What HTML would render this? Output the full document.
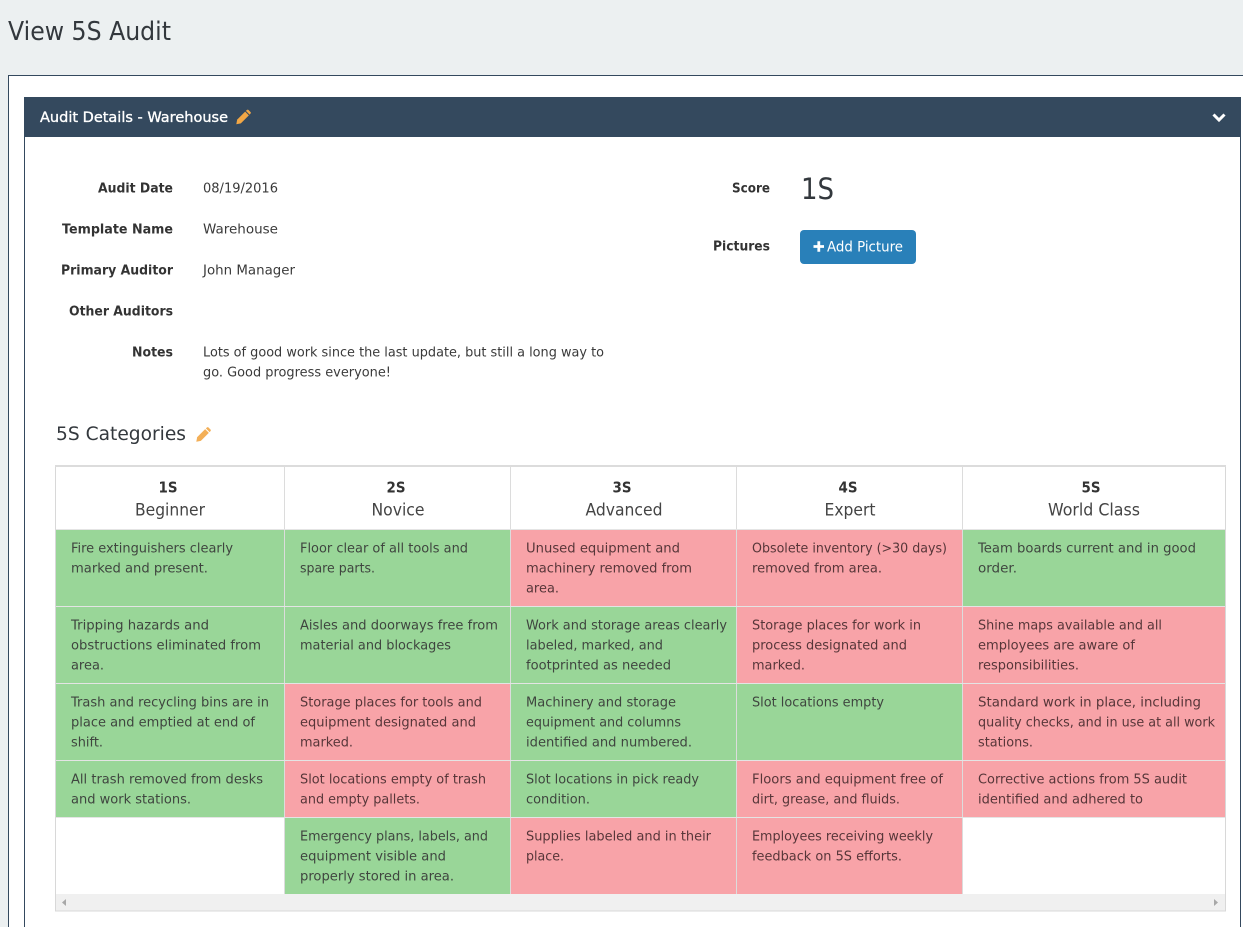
<!DOCTYPE html>
<html><head><meta charset="utf-8"><title>View 5S Audit</title>
<style>
html,body{margin:0;padding:0;width:1243px;height:927px;overflow:hidden;background:#ecf0f1}
svg{display:block}
text{font-family:"DejaVu Sans","Liberation Sans",sans-serif;font-size:13.6px;fill:#3a3a3a}
.b{font-weight:bold;fill:#333}
.c text{fill:#3f453f}
.r text{fill:#573639}
.h{font-size:16.5px;fill:#444}
</style></head><body>
<svg width="1243" height="927" viewBox="0 0 1243 927" xmlns="http://www.w3.org/2000/svg">
<defs><g id="p"><path d="M1.15 10.15 L9.15 2.15 L12.85 5.85 L4.85 13.85 L0.3 14.7 Z" fill="#f2a745"/><path d="M9.9 1.4 L11 .4 Q11.7 -.1 12.4 .4 L14.6 2.6 Q15.1 3.3 14.6 4 L13.6 5.1 Z" fill="#f2a745"/></g></defs>
<rect width="1243" height="927" fill="#ecf0f1"/>
<text x="8" y="40" style="font-size:25.5px;fill:#33383d" textLength="163" lengthAdjust="spacingAndGlyphs">View 5S Audit</text>
<rect x="8.5" y="75.5" width="1240" height="860" fill="#fff" stroke="#34495e"/>
<rect x="24.5" y="97.5" width="1216" height="840" fill="#fff" stroke="#34495e"/>
<rect x="24" y="97" width="1217" height="40" fill="#34495e"/>
<text x="40" y="122" class="b" style="fill:#fff;font-weight:normal;font-size:14.5px;stroke:#fff;stroke-width:.35" textLength="188" lengthAdjust="spacingAndGlyphs">Audit Details - Warehouse</text>
<use href="#p" x="236" y="109.5"/>
<path d="M1213.5 114.5 L1219 120 L1224.5 114.5" fill="none" stroke="#fff" stroke-width="3"/>

<g text-anchor="end">
<text x="173" y="192.5" class="b" textLength="75" lengthAdjust="spacingAndGlyphs">Audit Date</text>
<text x="173" y="233.5" class="b" textLength="111" lengthAdjust="spacingAndGlyphs">Template Name</text>
<text x="173" y="274.5" class="b" textLength="112" lengthAdjust="spacingAndGlyphs">Primary Auditor</text>
<text x="173" y="315.5" class="b" textLength="104" lengthAdjust="spacingAndGlyphs">Other Auditors</text>
<text x="173" y="356.5" class="b" textLength="41" lengthAdjust="spacingAndGlyphs">Notes</text>
<text x="770" y="192.5" class="b" textLength="38" lengthAdjust="spacingAndGlyphs">Score</text>
<text x="770" y="250.5" class="b" textLength="57" lengthAdjust="spacingAndGlyphs">Pictures</text>
</g>
<text x="203" y="192.5" textLength="75" lengthAdjust="spacingAndGlyphs">08/19/2016</text>
<text x="203" y="233.5" textLength="75" lengthAdjust="spacingAndGlyphs">Warehouse</text>
<text x="203" y="274.5" textLength="92" lengthAdjust="spacingAndGlyphs">John Manager</text>
<text x="203" y="356.5" textLength="401" lengthAdjust="spacingAndGlyphs">Lots of good work since the last update, but still a long way to</text>
<text x="203" y="376.5" textLength="188" lengthAdjust="spacingAndGlyphs">go. Good progress everyone!</text>
<text x="801" y="199" style="font-size:29px;fill:#33383d" textLength="33" lengthAdjust="spacingAndGlyphs">1S</text>
<rect x="800" y="230" width="116" height="34" rx="4" fill="#2980b9"/>
<path d="M813.5 246.5 H824 M818.8 241.2 V251.8" stroke="#fff" stroke-width="2.8"/>
<text x="827" y="251.5" style="fill:#fff;font-size:14.5px" textLength="76" lengthAdjust="spacingAndGlyphs">Add Picture</text>

<text x="56" y="440" style="font-size:19px;fill:#33383d" textLength="130" lengthAdjust="spacingAndGlyphs">5S Categories</text>
<use href="#p" x="196" y="427" opacity=".9"/>

<!-- table -->
<rect x="55.5" y="465.5" width="1170" height="445.5" fill="#fff" stroke="#d8d8d8" stroke-width="1"/>
<rect x="55" y="465" width="1171" height="2" fill="#dcdcdc"/>
<g fill="#99d698">
<rect x="56" y="530" width="228" height="287"/>
<rect x="285" y="530" width="225" height="153"/>
<rect x="511" y="607" width="225" height="76"/>
<rect x="511" y="684" width="225" height="133"/>
<rect x="737" y="684" width="225" height="76"/>
<rect x="963" y="530" width="262" height="76"/>
<rect x="285" y="818" width="225" height="76"/>
</g>
<g fill="#f8a3a8">
<rect x="511" y="530" width="225" height="76"/>
<rect x="737" y="530" width="225" height="153"/>
<rect x="963" y="607" width="262" height="210"/>
<rect x="285" y="684" width="225" height="133"/>
<rect x="737" y="761" width="225" height="56"/>
<rect x="511" y="818" width="225" height="76"/>
<rect x="737" y="818" width="225" height="76"/>
</g>
<g stroke="#e4e4e4" stroke-width="1">
<path d="M284.5 467V894M510.5 467V894M736.5 467V894M962.5 467V894" stroke="#dcdcdc"/>
<path d="M56 529.5H1225M56 606.5H1225M56 683.5H1225M56 760.5H1225M56 817.5H1225"/>
</g>
<rect x="56" y="894" width="1169" height="16.5" fill="#f0f0f0"/>
<path d="M66 899 V906 L62 902.5 Z" fill="#a8a8a8"/>
<path d="M1214 899 V906 L1218 902.5 Z" fill="#a8a8a8"/>

<g text-anchor="middle">
<text x="168" y="492.5" class="b" style="font-size:15px" textLength="19" lengthAdjust="spacingAndGlyphs">1S</text>
<text x="170" y="515.5" class="h" textLength="70" lengthAdjust="spacingAndGlyphs">Beginner</text>
<text x="396" y="492.5" class="b" style="font-size:15px" textLength="19" lengthAdjust="spacingAndGlyphs">2S</text>
<text x="398" y="515.5" class="h" textLength="53" lengthAdjust="spacingAndGlyphs">Novice</text>
<text x="622" y="492.5" class="b" style="font-size:15px" textLength="19" lengthAdjust="spacingAndGlyphs">3S</text>
<text x="624" y="515.5" class="h" textLength="77" lengthAdjust="spacingAndGlyphs">Advanced</text>
<text x="848" y="492.5" class="b" style="font-size:15px" textLength="19" lengthAdjust="spacingAndGlyphs">4S</text>
<text x="850" y="515.5" class="h" textLength="51" lengthAdjust="spacingAndGlyphs">Expert</text>
<text x="1091" y="492.5" class="b" style="font-size:15px" textLength="19" lengthAdjust="spacingAndGlyphs">5S</text>
<text x="1094" y="515.5" class="h" textLength="92" lengthAdjust="spacingAndGlyphs">World Class</text>
</g>

<g class="c" transform="translate(0,-.5)">
<text x="71" y="553" textLength="162" lengthAdjust="spacingAndGlyphs">Fire extinguishers clearly</text>
<text x="71" y="573" textLength="137" lengthAdjust="spacingAndGlyphs">marked and present.</text>
<text x="71" y="630" textLength="138" lengthAdjust="spacingAndGlyphs">Tripping hazards and</text>
<text x="71" y="650" textLength="190" lengthAdjust="spacingAndGlyphs">obstructions eliminated from</text>
<text x="71" y="670" textLength="33" lengthAdjust="spacingAndGlyphs">area.</text>
<text x="71" y="707" textLength="198" lengthAdjust="spacingAndGlyphs">Trash and recycling bins are in</text>
<text x="71" y="727" textLength="184" lengthAdjust="spacingAndGlyphs">place and emptied at end of</text>
<text x="71" y="747" textLength="32" lengthAdjust="spacingAndGlyphs">shift.</text>
<text x="71" y="784" textLength="192" lengthAdjust="spacingAndGlyphs">All trash removed from desks</text>
<text x="71" y="804" textLength="120" lengthAdjust="spacingAndGlyphs">and work stations.</text>
<text x="300" y="553" textLength="168" lengthAdjust="spacingAndGlyphs">Floor clear of all tools and</text>
<text x="300" y="573" textLength="75" lengthAdjust="spacingAndGlyphs">spare parts.</text>
<text x="300" y="630" textLength="198" lengthAdjust="spacingAndGlyphs">Aisles and doorways free from</text>
<text x="300" y="650" textLength="151" lengthAdjust="spacingAndGlyphs">material and blockages</text>
<text x="300" y="841" textLength="188" lengthAdjust="spacingAndGlyphs">Emergency plans, labels, and</text>
<text x="300" y="861" textLength="146" lengthAdjust="spacingAndGlyphs">equipment visible and</text>
<text x="300" y="881" textLength="154" lengthAdjust="spacingAndGlyphs">properly stored in area.</text>
<text x="526" y="630" textLength="201" lengthAdjust="spacingAndGlyphs">Work and storage areas clearly</text>
<text x="526" y="650" textLength="137" lengthAdjust="spacingAndGlyphs">labeled, marked, and</text>
<text x="526" y="670" textLength="145" lengthAdjust="spacingAndGlyphs">footprinted as needed</text>
<text x="526" y="707" textLength="150" lengthAdjust="spacingAndGlyphs">Machinery and storage</text>
<text x="526" y="727" textLength="155" lengthAdjust="spacingAndGlyphs">equipment and columns</text>
<text x="526" y="747" textLength="166" lengthAdjust="spacingAndGlyphs">identified and numbered.</text>
<text x="526" y="784" textLength="173" lengthAdjust="spacingAndGlyphs">Slot locations in pick ready</text>
<text x="526" y="804" textLength="64" lengthAdjust="spacingAndGlyphs">condition.</text>
<text x="752" y="707" textLength="132" lengthAdjust="spacingAndGlyphs">Slot locations empty</text>
<text x="978" y="553" textLength="218" lengthAdjust="spacingAndGlyphs">Team boards current and in good</text>
<text x="978" y="573" textLength="39" lengthAdjust="spacingAndGlyphs">order.</text>
</g>
<g class="r" transform="translate(0,-.5)">
<text x="300" y="707" textLength="182" lengthAdjust="spacingAndGlyphs">Storage places for tools and</text>
<text x="300" y="727" textLength="176" lengthAdjust="spacingAndGlyphs">equipment designated and</text>
<text x="300" y="747" textLength="53" lengthAdjust="spacingAndGlyphs">marked.</text>
<text x="300" y="784" textLength="186" lengthAdjust="spacingAndGlyphs">Slot locations empty of trash</text>
<text x="300" y="804" textLength="120" lengthAdjust="spacingAndGlyphs">and empty pallets.</text>
<text x="526" y="553" textLength="154" lengthAdjust="spacingAndGlyphs">Unused equipment and</text>
<text x="526" y="573" textLength="166" lengthAdjust="spacingAndGlyphs">machinery removed from</text>
<text x="526" y="593" textLength="33" lengthAdjust="spacingAndGlyphs">area.</text>
<text x="526" y="841" textLength="185" lengthAdjust="spacingAndGlyphs">Supplies labeled and in their</text>
<text x="526" y="861" textLength="38" lengthAdjust="spacingAndGlyphs">place.</text>
<text x="752" y="553" textLength="195" lengthAdjust="spacingAndGlyphs">Obsolete inventory (&gt;30 days)</text>
<text x="752" y="573" textLength="130" lengthAdjust="spacingAndGlyphs">removed from area.</text>
<text x="752" y="630" textLength="169" lengthAdjust="spacingAndGlyphs">Storage places for work in</text>
<text x="752" y="650" textLength="155" lengthAdjust="spacingAndGlyphs">process designated and</text>
<text x="752" y="670" textLength="53" lengthAdjust="spacingAndGlyphs">marked.</text>
<text x="752" y="784" textLength="191" lengthAdjust="spacingAndGlyphs">Floors and equipment free of</text>
<text x="752" y="804" textLength="148" lengthAdjust="spacingAndGlyphs">dirt, grease, and fluids.</text>
<text x="752" y="841" textLength="181" lengthAdjust="spacingAndGlyphs">Employees receiving weekly</text>
<text x="752" y="861" textLength="150" lengthAdjust="spacingAndGlyphs">feedback on 5S efforts.</text>
<text x="978" y="630" textLength="184" lengthAdjust="spacingAndGlyphs">Shine maps available and all</text>
<text x="978" y="650" textLength="157" lengthAdjust="spacingAndGlyphs">employees are aware of</text>
<text x="978" y="670" textLength="101" lengthAdjust="spacingAndGlyphs">responsibilities.</text>
<text x="978" y="707" textLength="223" lengthAdjust="spacingAndGlyphs">Standard work in place, including</text>
<text x="978" y="727" textLength="237" lengthAdjust="spacingAndGlyphs">quality checks, and in use at all work</text>
<text x="978" y="747" textLength="55" lengthAdjust="spacingAndGlyphs">stations.</text>
<text x="978" y="784" textLength="209" lengthAdjust="spacingAndGlyphs">Corrective actions from 5S audit</text>
<text x="978" y="804" textLength="165" lengthAdjust="spacingAndGlyphs">identified and adhered to</text>
</g>
</svg>
</body></html>
